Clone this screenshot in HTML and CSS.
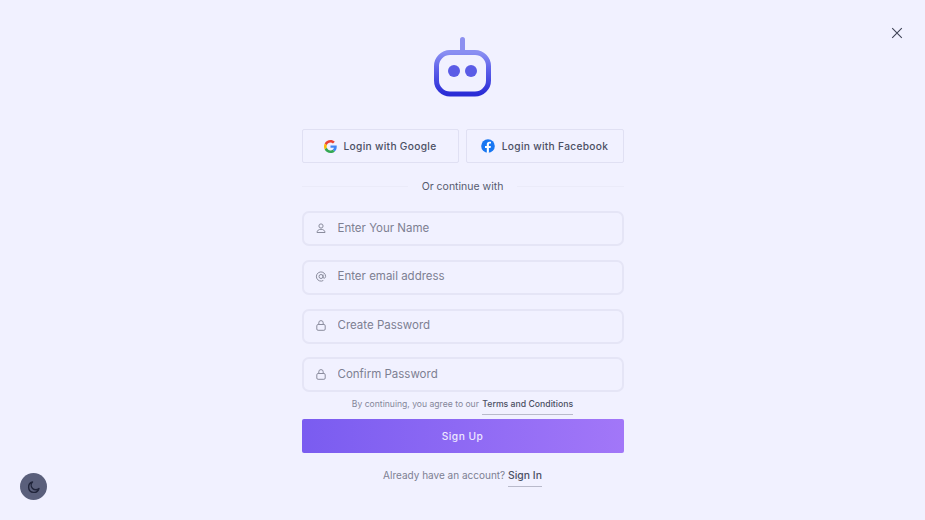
FILE: index.html
```html
<!DOCTYPE html>
<html lang="en">
<head>
<meta charset="utf-8">
<title>Sign Up</title>
<link rel="stylesheet" href="styles.css">
</head>
<body>
<button class="close" aria-label="Close">
  <svg width="12" height="12" viewBox="0 0 12 12"><path d="M1.200 1.200L10.800 10.800M10.800 1.200L1.200 10.800" fill="none" stroke="#3f4356" stroke-width="1.100"/></svg>
</button>
<main class="panel">
  <svg class="logo" width="58" height="60" viewBox="0 0 58 60">
    <defs>
      <linearGradient id="bot" x1="0" y1="0" x2="0" y2="1">
        <stop offset="0" stop-color="#8a8ff2"/>
        <stop offset="0.4" stop-color="#5f62ea"/>
        <stop offset="1" stop-color="#2a2cd6"/>
      </linearGradient>
    </defs>
    <rect x="26" y="0" width="5" height="16" rx="2.500" fill="#8d90f0"/>
    <rect x="2.500" y="15.500" width="52" height="41.500" rx="13.500" fill="none" stroke="url(#bot)" stroke-width="5"/>
    <circle cx="20" cy="34" r="6" fill="#5b5ce6"/>
    <circle cx="37" cy="34" r="6" fill="#5b5ce6"/>
  </svg>
  <div class="socials">
    <button class="social">
      <svg width="13" height="13" viewBox="0 0 48 48"><path fill="#EA4335" d="M24 9.500c3.500 0 6.700 1.300 9.100 3.500l6.800-6.800C35.800 2.400 30.300 0 24 0 14.600 0 6.500 5.400 2.600 13.200l7.900 6.200C12.400 13.700 17.700 9.500 24 9.500z"/><path fill="#4285F4" d="M47 24.500c0-1.600-.1-3.100-.4-4.500H24v9h12.900c-.6 3-2.200 5.500-4.800 7.200l7.700 6C44.300 38 47 31.800 47 24.500z"/><path fill="#FBBC05" d="M10.500 28.600c-.5-1.500-.8-3-.8-4.600s.3-3.100.8-4.600l-7.900-6.200C.9 16.500 0 20.100 0 24s.9 7.500 2.600 10.800l7.900-6.200z"/><path fill="#34A853" d="M24 48c6.500 0 11.900-2.100 15.900-5.800l-7.700-6c-2.200 1.500-4.900 2.300-8.200 2.300-6.300 0-11.600-4.200-13.500-9.900l-7.900 6.200C6.500 42.600 14.600 48 24 48z"/></svg>
      <span>Login with Google</span>
    </button>
    <button class="social">
      <svg width="14" height="14" viewBox="0 0 14 14"><circle cx="7" cy="7" r="6.800" fill="#1877f2"/><path fill="#fff" d="M9.600 9l.3-2H7.900V5.700c0-.6.300-1.100 1.100-1.100H10V2.900s-.8-.1-1.600-.1C6.800 2.800 5.800 3.800 5.800 5.500V7H4v2h1.800v4.800a7 7 0 0 0 2.100 0V9h1.700z"/></svg>
      <span>Login with Facebook</span>
    </button>
  </div>
  <div class="divider"><i></i><span>Or continue with</span><i></i></div>
  <form class="fields">
    <label class="field">
      <svg class="ico" width="12" height="12" viewBox="0 0 12 12"><circle cx="6" cy="3" r="2.100"/><path d="M2 9.500c0-2 1.800-3.200 4-3.200s4 1.200 4 3.200z"/></svg>
      <input placeholder="Enter Your Name" type="text">
    </label>
    <label class="field">
      <svg class="ico" width="12" height="12" viewBox="0 0 12 12"><circle cx="6" cy="5.500" r="2"/><path d="M8 3.500v2.600c0 1.500 2.600 1.500 2.600-.6A4.600 4.600 0 1 0 8.300 9.500"/></svg>
      <input placeholder="Enter email address" type="text">
    </label>
    <label class="field">
      <svg class="ico" width="12" height="12" viewBox="0 0 12 12"><rect x="1.800" y="4.500" width="8.400" height="5.800" rx="1.300"/><path d="M3.800 4.500V2.800a2.200 2.200 0 0 1 4.400 0V4.500"/></svg>
      <input placeholder="Create Password" type="password">
    </label>
    <label class="field">
      <svg class="ico" width="12" height="12" viewBox="0 0 12 12"><rect x="1.800" y="4.500" width="8.400" height="5.800" rx="1.300"/><path d="M3.800 4.500V2.800a2.200 2.200 0 0 1 4.400 0V4.500"/></svg>
      <input placeholder="Confirm Password" type="password">
    </label>
  </form>
  <p class="terms">By continuing, you agree to our <a class="link" href="#">Terms and Conditions</a></p>
  <button class="submit">Sign Up</button>
  <p class="signin">Already have an account? <a class="link link-lg" href="#">Sign In</a></p>
</main>
<button class="theme" aria-label="Toggle theme">
  <svg width="14" height="14" viewBox="0 0 24 24"><path d="M20.500 14.500A9 9 0 1 1 9.500 3.500a7.500 7.500 0 0 0 11 11z" fill="none" stroke="#20243a" stroke-width="2.400" stroke-linejoin="round"/></svg>
</button>
</body>
</html>
```
FILE: styles.css
```css
* { box-sizing: border-box; }
html, body { height: 100%; }
body {
  margin: 0;
  background: #f1f1ff;
  font-family: "Inter", "Liberation Sans", sans-serif;
  color: #4b4f63;
  overflow: hidden;
}
button { font-family: inherit; cursor: pointer; }
.panel {
  width: 322px;
  margin: 0 auto;
  padding-top: 37px;
  display: flex;
  flex-direction: column;
  align-items: stretch;
}
.logo { align-self: center; display: block; margin-bottom: 32px; }
.socials { display: grid; grid-template-columns: 157px 158px; gap: 7px; }
.social {
  height: 34px;
  display: flex;
  align-items: center;
  justify-content: center;
  gap: 7px;
  background: transparent;
  border: 1px solid #e0e0f3;
  border-radius: 2px;
  padding: 0;
  font-size: 10.200px;
  font-weight: 500;
  letter-spacing: 0.3px;
  color: #4b4f63;
}
.divider {
  display: flex;
  align-items: center;
  gap: 14px;
  height: 16px;
  margin: 15px 0 17px;
  font-size: 10.500px;
  color: #565a6e;
  white-space: nowrap;
}
.divider i { flex: 1; height: 1px; background: #ebebf9; }
.fields { display: flex; flex-direction: column; gap: 13.800px; }
.field {
  height: 35px;
  display: flex;
  align-items: center;
  gap: 11px;
  padding-left: 11px;
  border: 2px solid #e5e5f6;
  border-radius: 7px;
}
.field input {
  flex: 1;
  min-width: 0;
  border: 0;
  outline: 0;
  background: transparent;
  padding: 0 0 2px;
  font: inherit;
  font-size: 11.500px;
  color: #4b4f63;
}
.field input::placeholder { color: #7d8092; opacity: 1; }
.ico { fill: none; stroke: #8a8c9d; stroke-width: 1; flex: none; }
.terms {
  margin: 5px 0 0;
  height: 22px;
  text-align: center;
  font-size: 8.600px;
  line-height: 14px;
  color: #85879a;
}
.link {
  display: inline-block;
  margin-left: 1px;
  padding-bottom: 3px;
  border-bottom: 1px solid #b9bacb;
  color: #4b4f63;
  font-size: 8.700px;
  font-weight: 500;
  text-decoration: none;
}
.link-lg { font-size: 10.400px; margin-left: 0; }
.submit {
  height: 34px;
  border: 0;
  border-radius: 2px;
  background: linear-gradient(90deg, #7a5cf0, #a277f8);
  color: #eee8ff;
  font-size: 10.200px;
  font-weight: 500;
  letter-spacing: 0.5px;
}
.signin {
  margin: 15px 0 0;
  text-align: center;
  font-size: 10px;
  line-height: 15px;
  color: #7d8092;
}
.close {
  position: absolute;
  top: 26px;
  left: 890px;
  width: 13px;
  height: 13px;
  padding: 0;
  border: 0;
  background: none;
  display: flex;
  align-items: center;
  justify-content: center;
}
.theme {
  position: absolute;
  left: 20px;
  top: 473px;
  width: 27px;
  height: 27px;
  padding: 0;
  border: 0;
  border-radius: 50%;
  background: #5a5f7b;
  display: flex;
  align-items: center;
  justify-content: center;
}
```
